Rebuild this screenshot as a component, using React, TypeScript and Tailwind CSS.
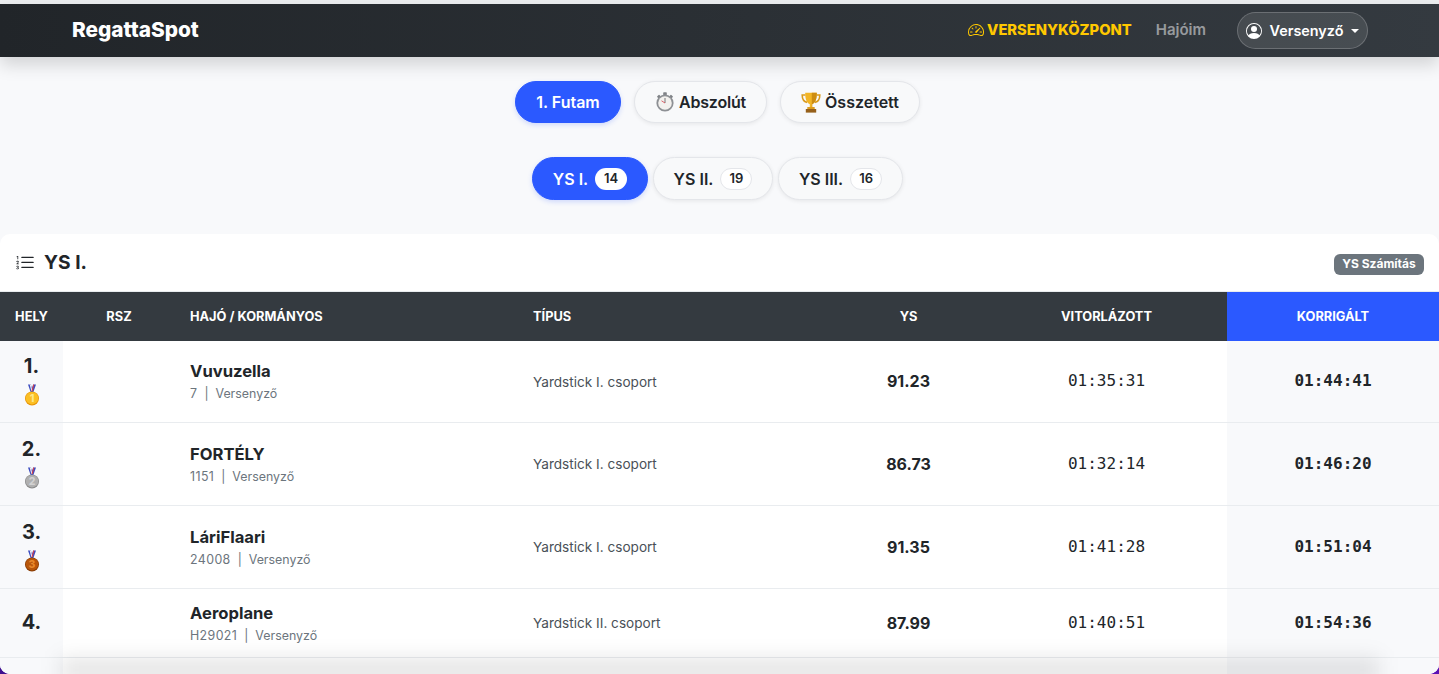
import { BsListOl, BsPersonCircle, BsSpeedometer2 } from 'react-icons/bs'

type Result = {
  place: number
  boat: string
  sail: string
  type: string
  ys: string
  sailed: string
  corrected: string
}

const results: Result[] = [
  { place: 1, boat: 'Vuvuzella', sail: '7', type: 'Yardstick I. csoport', ys: '91.23', sailed: '01:35:31', corrected: '01:44:41' },
  { place: 2, boat: 'FORTÉLY', sail: '1151', type: 'Yardstick I. csoport', ys: '86.73', sailed: '01:32:14', corrected: '01:46:20' },
  { place: 3, boat: 'LáriFlaari', sail: '24008', type: 'Yardstick I. csoport', ys: '91.35', sailed: '01:41:28', corrected: '01:51:04' },
  { place: 4, boat: 'Aeroplane', sail: 'H29021', type: 'Yardstick II. csoport', ys: '87.99', sailed: '01:40:51', corrected: '01:54:36' },
]

const rowHeights: Record<number, string> = {
  1: 'h-[81px] border-b border-[#e9ecef]',
  2: 'h-[83px] border-b border-[#e9ecef]',
  3: 'h-[83px] border-b border-[#e9ecef]',
  4: 'h-[69px] border-b border-[#e9ecef]',
}

const medals: Record<number, { light: string; dark: string; text: string }> = {
  1: { light: '#fbbf24', dark: '#e8960a', text: '#fde68a' },
  2: { light: '#b0b0b0', dark: '#8c8c8c', text: '#d2d2d2' },
  3: { light: '#b8560a', dark: '#8a3d05', text: '#e8892c' },
}

function Medal({ place }: { place: number }) {
  const m = medals[place]
  return (
    <svg width="16" height="22" viewBox="0 0 16 22" className="mx-auto mt-[7px] block">
      <path d="M4 0.500h2.800L8 4l1.200-3.500H12L9.400 8H6.600z" fill="#3b4cc0" />
      <path d="M5.700 0.500h1.100L8.500 7H7.300z" fill="#f1f1f1" />
      <path d="M10.300 0.500H9.200L7.500 7h1.200z" fill="#d8404a" />
      <circle cx="8" cy="14.500" r="7" fill={m.dark} />
      <circle cx="8" cy="14.200" r="6.200" fill={m.light} />
      <text x="8" y="18" textAnchor="middle" fontSize="10.500" fontWeight="800" fill={m.text} fontFamily="Inter, sans-serif">{place}</text>
    </svg>
  )
}

function Stopwatch() {
  return (
    <svg width="20" height="20" viewBox="0 0 20 20">
      <rect x="8.200" y="0.300" width="3.600" height="2.800" rx="0.700" fill="#7f8286" />
      <rect x="15" y="3" width="3" height="2.400" rx="0.600" transform="rotate(42 16 4)" fill="#7f8286" />
      <rect x="2" y="3" width="3" height="2.400" rx="0.600" transform="rotate(-42 4 4)" fill="#7f8286" />
      <circle cx="10" cy="11" r="8.600" fill="#8d9094" />
      <circle cx="10" cy="11" r="6.800" fill="#f3f1ee" />
      <path d="M10 11V6" stroke="#55585c" strokeWidth="0.800" />
      <path d="M10 11L6.500 8.800" stroke="#d8404a" strokeWidth="0.800" />
    </svg>
  )
}

function Trophy() {
  return (
    <svg width="20" height="21" viewBox="0 0 20 21">
      <path d="M4.500 3H1.200c0 4 1.300 6.600 4.800 7.400M15.500 3h3.300c0 4-1.300 6.600-4.800 7.400" fill="none" stroke="#d99a1c" strokeWidth="1.600" />
      <path d="M4.200 0.800h11.600c0 6-1.200 10.200-4.600 11.400v3H8.800v-3C5.400 11 4.200 6.800 4.200 0.800z" fill="#f2b526" />
      <path d="M10.800 0.800h5c0 6-1.200 10.200-4.600 11.400v3h-0.400z" fill="#cd8d12" />
      <rect x="6.300" y="15" width="7.400" height="2" fill="#dc9c1c" />
      <rect x="4.800" y="17" width="10.400" height="3.600" fill="#96601a" />
    </svg>
  )
}

function Pill({ active, className, children }: { active?: boolean; className: string; children: React.ReactNode }) {
  return (
    <button
      className={
        active
          ? `flex items-center justify-center rounded-full border border-[#2b59ff] bg-[#2b59ff] font-semibold text-white shadow-[0_2px_5px_rgba(43,89,255,0.2)] ${className}`
          : `flex items-center justify-center rounded-full border border-[#e4e6ea] bg-[#f8f9fa] font-semibold text-[#212529] shadow-[0_1px_4px_rgba(0,0,0,0.08)] ${className}`
      }
    >
      {children}
    </button>
  )
}

function Count({ n, active }: { n: number; active?: boolean }) {
  return (
    <span
      className={
        active
          ? 'flex h-[22px] w-8 items-center justify-center rounded-full bg-white text-[13px] font-semibold text-[#212529]'
          : 'flex h-[22px] w-8 items-center justify-center rounded-full border border-[#e4e6ea] bg-white text-[13px] font-semibold text-[#212529]'
      }
    >
      {n}
    </span>
  )
}

export default function App() {
  return (
    <div className="h-[674px] overflow-hidden bg-[linear-gradient(90deg,#3f0f8f,#5b12b5)] font-['Inter',sans-serif] text-[#212529]">
      <div className="relative h-[674px] overflow-hidden rounded-b-[10px] bg-[#f8f9fb] pt-[4px]">
        <div className="absolute inset-x-0 top-0 h-[4px] bg-[#eceef0]" />

        {/* Navbar */}
        <nav className="relative z-10 flex h-[53px] items-center bg-[linear-gradient(90deg,#212529,#343a40)] pl-[72px] pr-[71px] shadow-[0_8px_16px_rgba(0,0,0,0.15)]">
          <span className="text-[20.8px] font-extrabold leading-none text-white">RegattaSpot</span>
          <div className="ml-auto flex items-center">
            <span className="flex items-center gap-[3px] text-[14.7px] font-extrabold uppercase text-[#ffc800]">
              <BsSpeedometer2 className="h-4 w-4" />
              Versenyközpont
            </span>
            <span className="ml-6 text-[15px] font-semibold text-white/50">Hajóim</span>
            <div className="ml-[31px] flex h-[37px] w-[131px] items-center justify-center gap-2 rounded-full border border-white/20 bg-white/10 text-[14.4px] font-semibold text-white">
              <BsPersonCircle className="h-4 w-4" />
              Versenyző
              <span className="h-0 w-0 border-x-[4px] border-t-[4px] border-x-transparent border-t-white" />
            </div>
          </div>
        </nav>

        {/* Futam tabs */}
        <div className="ml-[515px] mt-6 flex gap-[13px]">
          <Pill active className="h-[42px] w-[106px] text-[16px]">1. Futam</Pill>
          <Pill className="h-[42px] w-[133px] gap-1 text-[16px] tracking-[-0.2px]"><Stopwatch /> Abszolút</Pill>
          <Pill className="h-[42px] w-[140px] gap-1 text-[16px]"><Trophy /> Összetett</Pill>
        </div>

        {/* Csoport tabs */}
        <div className="ml-[532px] mt-[34px] flex gap-[5px]">
          <Pill active className="h-[43px] w-[116px] gap-[7px] text-[16px]">YS I. <Count n={14} active /></Pill>
          <Pill className="h-[43px] w-[120px] gap-[7px] text-[16px]">YS II. <Count n={19} /></Pill>
          <Pill className="h-[43px] w-[125px] gap-[7px] text-[16px]">YS III. <Count n={16} /></Pill>
        </div>

        {/* Results card */}
        <section className="mt-[34px] overflow-hidden rounded-t-[10px] bg-white">
          <header className="flex h-[58px] items-center border-b border-[#e9ecef] pl-[15px] pr-[15px]">
            <BsListOl className="h-5 w-5" />
            <h2 className="ml-[9px] text-[19.2px] font-bold leading-none">YS I.</h2>
            <span className="ml-auto mt-[3px] flex h-[21px] w-[90px] items-center justify-center rounded-md bg-[#6c757d] text-[12px] font-bold text-white">YS Számítás</span>
          </header>

          <table className="w-full table-fixed border-collapse">
            <colgroup>
              <col className="w-[63px]" />
              <col className="w-[112px]" />
              <col className="w-[343px]" />
              <col className="w-[313px]" />
              <col className="w-[155px]" />
              <col className="w-[241px]" />
              <col className="w-[212px]" />
            </colgroup>
            <thead>
              <tr className="h-[49px] bg-[#343a40] text-[12.8px] font-bold uppercase text-white">
                <th className="text-center font-bold">Hely</th>
                <th className="text-center font-bold">Rsz</th>
                <th className="pl-[15px] text-left font-bold">Hajó / Kormányos</th>
                <th className="pl-[15px] text-left font-bold">Típus</th>
                <th className="text-center font-bold">YS</th>
                <th className="text-center font-bold">Vitorlázott</th>
                <th className="bg-[#2b59ff] text-center font-bold">Korrigált</th>
              </tr>
            </thead>
            <tbody>
              {results.map((r) => (
                <tr key={r.place} className={rowHeights[r.place]}>
                  <td className="bg-[#f8f9fb] text-center">
                    <div className="text-[20px] font-bold leading-[21px]">{r.place}.</div>
                    {medals[r.place] && <Medal place={r.place} />}
                  </td>
                  <td />
                  <td className="pl-[15px]">
                    <div className="text-[16.6px] font-bold leading-[22px]">{r.boat}</div>
                    <div className="mt-[4px] text-[12.4px] leading-[16px] text-[#6c757d]">
                      <span className="tracking-[0.4px]">{r.sail}</span>&nbsp; | &nbsp;Versenyző
                    </div>
                  </td>
                  <td className="pl-[15px] pt-[2px] text-[13.6px] text-[#495057]">{r.type}</td>
                  <td className="text-center text-[16px] font-bold">{r.ys}</td>
                  <td className="text-center font-['DejaVu_Sans_Mono',monospace] text-[16px] text-[#212529]">{r.sailed}</td>
                  <td className="bg-[#f8f9fb] text-center font-['DejaVu_Sans_Mono',monospace] text-[16px] font-bold">{r.corrected}</td>
                </tr>
              ))}
              <tr className="h-[20px]">
                <td className="bg-[#f8f9fb]" />
                <td colSpan={5} />
                <td className="bg-[#f8f9fb]" />
              </tr>
            </tbody>
          </table>
        </section>

        {/* window shadow at the bottom edge */}
        <div className="pointer-events-none absolute inset-x-[60px] -bottom-[8px] h-[24px] bg-black/10 blur-[10px]" />
      </div>
    </div>
  )
}
